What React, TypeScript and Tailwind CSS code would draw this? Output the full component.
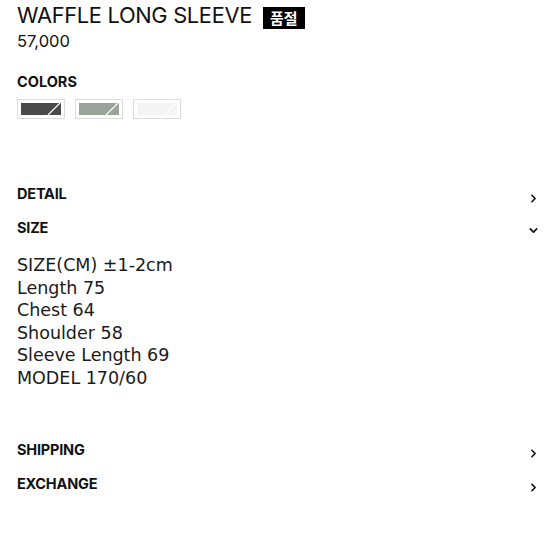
import { ChevronDown, ChevronRight } from "lucide-react";

const swatches = [
    { name: "charcoal", color: "bg-[#4a4a4a]" },
    { name: "sage", color: "bg-[#9aa39a]" },
    { name: "white", color: "bg-[#f4f4f4]" },
];

const sizeLines = ["SIZE(CM) ±1-2cm", "Length 75", "Chest 64", "Shoulder 58", "Sleeve Length 69", "MODEL 170/60"];

function Swatch({ color }: { color: string }) {
    return (
        <div className="h-[20px] w-[48px] border border-[#dcdcdc] bg-white p-[3px]">
            <div className={`relative h-full w-full overflow-hidden ${color}`}>
                <svg className="absolute inset-0 h-full w-full" viewBox="0 0 40 12" preserveAspectRatio="none">
                    <line x1="27" y1="12" x2="39" y2="0" stroke="#ffffff" strokeWidth="1.2" />
                </svg>
            </div>
        </div>
    );
}

function Row({ label, open }: { label: string; open?: boolean }) {
    return (
        <div className="flex h-[34px] items-center justify-between pr-[14px]">
            <span className="text-[14.5px] font-bold tracking-[-0.2px] text-[#111]">{label}</span>
            {open ? (
                <ChevronDown size={13} strokeWidth={3} className="mt-[4px] text-[#111]" />
            ) : (
                <ChevronRight size={13} strokeWidth={3} className="mt-[8px] text-[#111]" />
            )}
        </div>
    );
}

export default function App() {
    return (
        <div className="min-h-[554px] w-[554px] bg-white pl-[17px] text-[#111] [font-family:Inter,'Noto_Sans_CJK_KR',sans-serif]">
            <div className="flex items-center gap-[11px] pt-[2px]">
                <h1 className="text-[21.8px] leading-[27px] font-normal tracking-[-0.3px]">WAFFLE LONG SLEEVE</h1>
                <span className="mt-[4px] bg-black px-[7px] text-[15px] leading-[22px] font-bold text-white [font-family:'Noto_Sans_CJK_KR',sans-serif]">
                    품절
                </span>
            </div>
            <p className="mt-[1px] text-[16.5px] leading-[22px]">57,000</p>

            <p className="mt-[20px] text-[14.5px] leading-[20px] font-bold">COLORS</p>
            <div className="mt-[7px] flex gap-[10px]">
                {swatches.map((s) => (
                    <Swatch key={s.name} color={s.color} />
                ))}
            </div>

            <div className="mt-[58px]">
                <Row label="DETAIL" />
                <Row label="SIZE" open />
            </div>

            <div className="mt-[9px] text-[17.5px] leading-[22.6px] text-[#1a1a1a] [font-family:'DejaVu_Sans',sans-serif]">
                {sizeLines.map((line) => (
                    <p key={line}>{line}</p>
                ))}
            </div>

            <div className="mt-[43px]">
                <Row label="SHIPPING" />
                <Row label="EXCHANGE" />
            </div>
        </div>
    );
}
